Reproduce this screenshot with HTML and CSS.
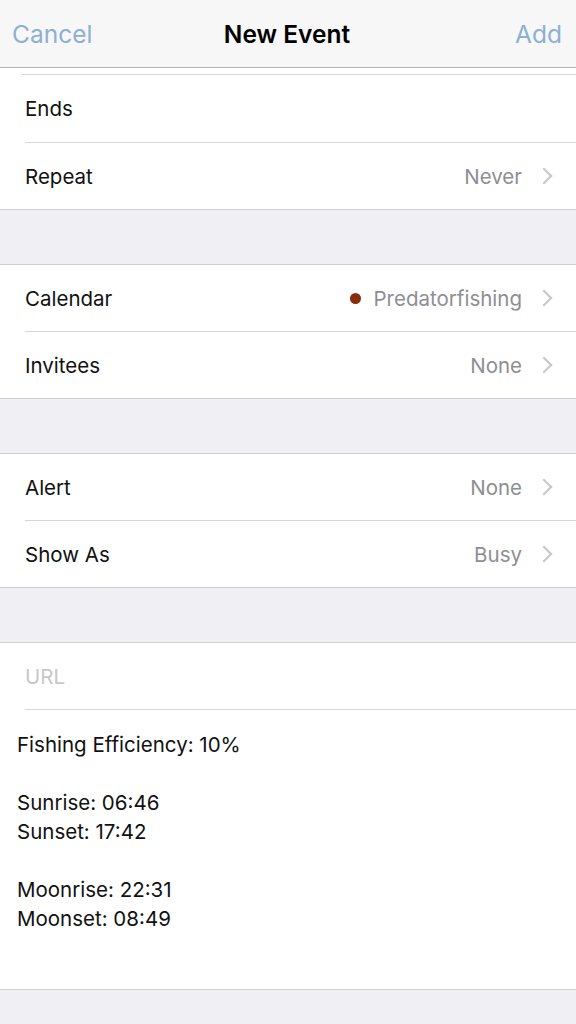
FILE: index.html
```html
<!DOCTYPE html>
<html lang="en">
<head>
    <meta charset="UTF-8">
    <meta name="viewport" content="width=device-width, initial-scale=1.0">
    <title>New Event</title>
    <link rel="stylesheet" href="styles.css">
</head>
<body>
    <header class="navbar">
        <span class="nav-btn">Cancel</span>
        <h1 class="nav-title">New Event</h1>
        <span class="nav-btn right">Add</span>
    </header>

    <!-- Time section (scrolled) -->
    <section class="group first">
        <div class="peek"></div>
        <div class="row tall"><span class="label">Ends</span></div>
        <div class="row">
            <span class="label">Repeat</span>
            <span class="value">Never</span>
            <span class="chevron"></span>
        </div>
    </section>

    <section class="group">
        <div class="row">
            <span class="label">Calendar</span>
            <span class="value"><span class="dot"></span>Predatorfishing</span>
            <span class="chevron"></span>
        </div>
        <div class="row">
            <span class="label">Invitees</span>
            <span class="value">None</span>
            <span class="chevron"></span>
        </div>
    </section>

    <section class="group">
        <div class="row">
            <span class="label">Alert</span>
            <span class="value">None</span>
            <span class="chevron"></span>
        </div>
        <div class="row">
            <span class="label">Show As</span>
            <span class="value">Busy</span>
            <span class="chevron"></span>
        </div>
    </section>

    <section class="group">
        <div class="row"><span class="placeholder">URL</span></div>
        <div class="notes">
            <p>Fishing Efficiency: 10%</p>
            <p>Sunrise: 06:46<br>Sunset: 17:42</p>
            <p>Moonrise: 22:31<br>Moonset: 08:49</p>
        </div>
    </section>
</body>
</html>
```

FILE: styles.css
```css
body {
    margin: 0;
    background-color: #efeff4;
    font-family: Inter, "Liberation Sans", sans-serif;
    color: #111;
}

.navbar {
    height: 67px;
    display: grid;
    grid-template-columns: 1fr auto 1fr;
    align-items: center;
    padding: 0 14px 0 12px;
    background-color: #f7f7f7;
    border-bottom: 1px solid #b4b4b4;
}

.nav-btn {
    font-size: 24.5px;
    color: #8db0d3;
}

.nav-btn.right {
    text-align: right;
}

.nav-title {
    margin: 0;
    font-size: 24.5px;
    font-weight: 600;
    color: #000;
}

.group {
    background-color: #fff;
    border-top: 1px solid #cfcfd3;
    border-bottom: 1px solid #cfcfd3;
    margin-top: 54px;
}

.group.first {
    margin-top: 0;
    border-top: none;
}

/* bottom of the row above, scrolled under the bar */
.peek {
    height: 6px;
    margin-left: 22px;
    border-bottom: 1px solid #d6d6da;
}

.row {
    height: 66px;
    display: flex;
    align-items: center;
    padding: 0 24px 0 25px;
    position: relative;
}

.row.tall {
    height: 67px;
}

.row + .row::before,
.row + .notes::before {
    content: "";
    position: absolute;
    top: -1px;
    left: 25px;
    right: 0;
    border-top: 1px solid #d6d6da;
}

.row + .row {
    margin-top: 1px;
}

.label {
    font-size: 20.5px;
    flex: 1;
}

.value {
    font-size: 20.5px;
    color: #8e8e93;
    display: flex;
    align-items: center;
}

.dot {
    width: 11px;
    height: 11px;
    border-radius: 50%;
    background-color: #8a2d0c;
    margin-right: 13px;
}

.chevron {
    width: 10px;
    height: 10px;
    border-right: 2px solid #c7c7cc;
    border-top: 2px solid #c7c7cc;
    transform: rotate(45deg);
    margin-left: 16px;
    margin-right: 2px;
}

.placeholder {
    font-size: 20.5px;
    color: #c7c7cd;
}

.notes {
    position: relative;
    margin-top: 1px;
    padding: 20px 17px 56px;
    font-size: 20.5px;
    line-height: 29px;
}

.notes p {
    margin: 0 0 29px;
}

.notes p:last-child {
    margin-bottom: 0;
}
```
